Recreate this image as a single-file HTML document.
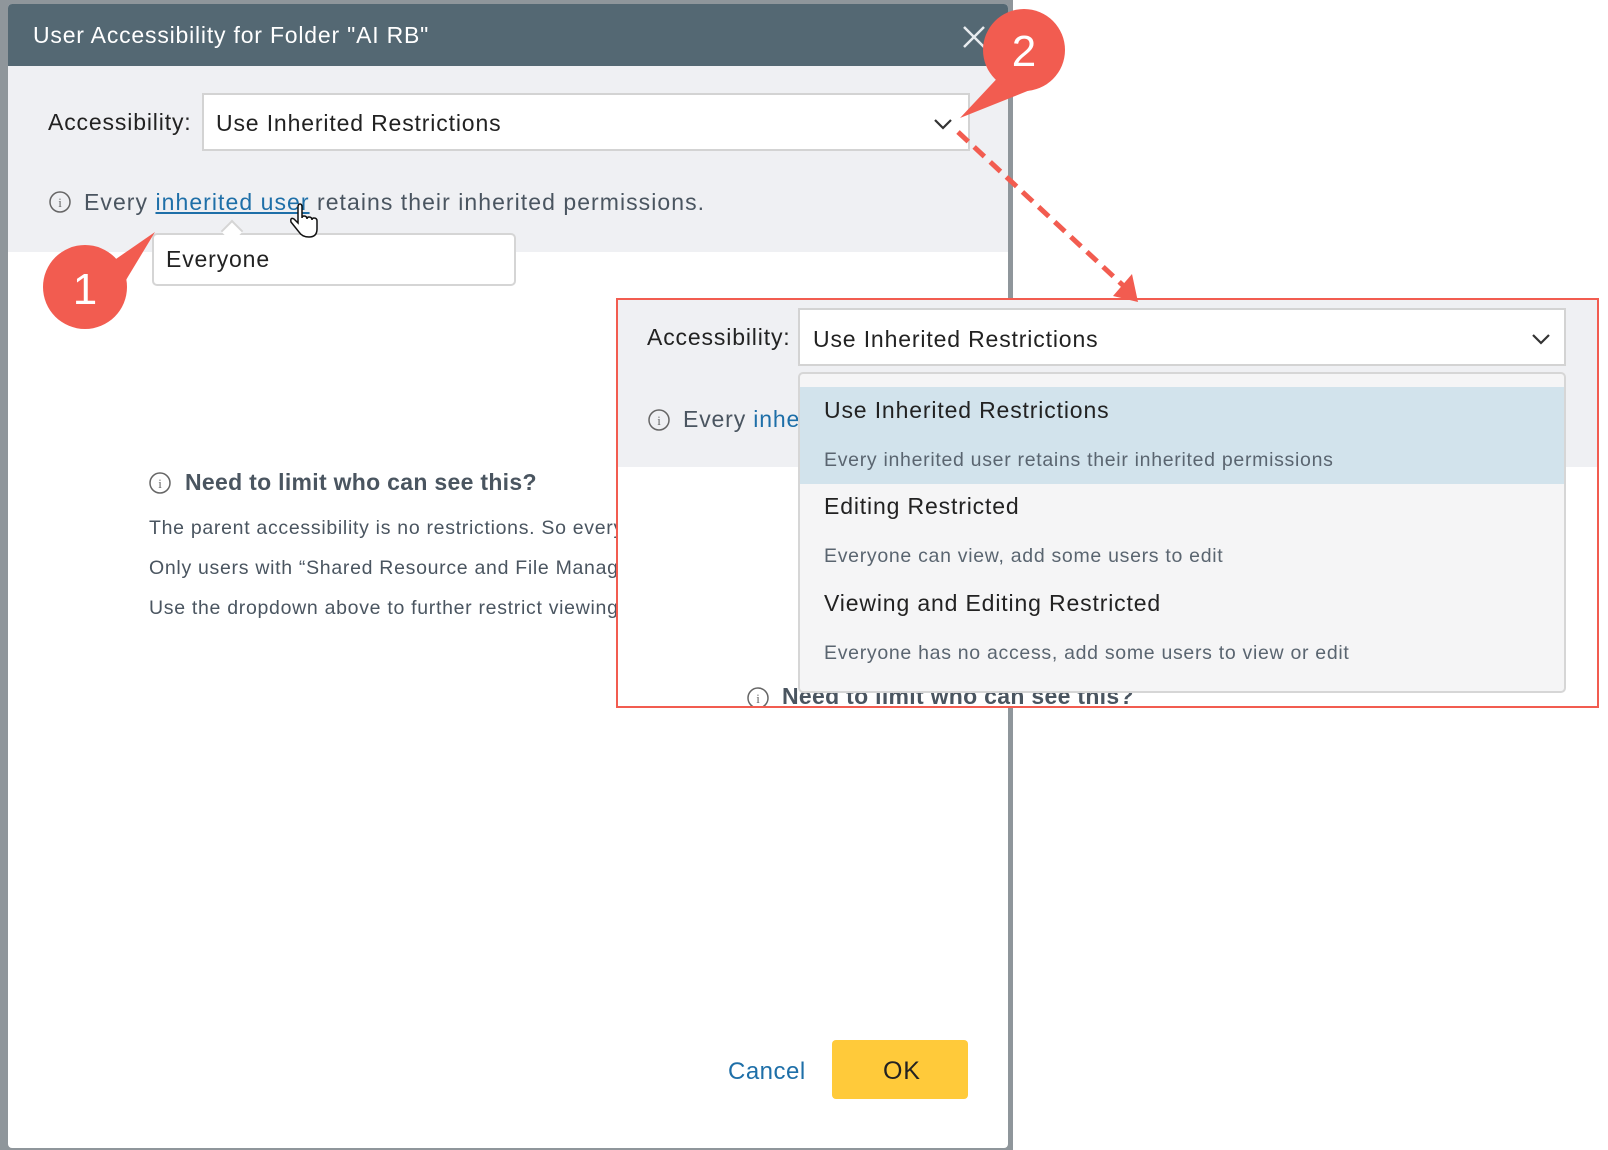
<!DOCTYPE html>
<html><head><meta charset="utf-8"><style>
*{box-sizing:border-box;margin:0;padding:0}
body{width:1608px;height:1150px;position:relative;overflow:hidden;background:#fff;font-family:"Liberation Sans",sans-serif;}
.abs{position:absolute}
.t{position:absolute;white-space:nowrap;line-height:1;letter-spacing:0.85px}
.s{letter-spacing:0.7px}
</style></head><body>
<div class="abs" style="left:0;top:0;width:1013px;height:1150px;background:#8f969b"></div>
<div class="abs" style="left:8px;top:4px;width:1000px;height:1144px;background:#fff;border-radius:4px;overflow:hidden">
  <div class="abs" style="left:0;top:0;width:1000px;height:62px;background:#546873"></div>
  <div class="t" style="left:25px;top:20px;font-size:23px;color:#fff;letter-spacing:0.8px">User Accessibility for Folder "AI RB"</div>
  <div class="abs" style="left:0;top:62px;width:1000px;height:186px;background:#eff0f3"></div>
  <div class="t" style="left:40px;top:107px;font-size:23px;color:#222">Accessibility:</div>
  <div class="abs" style="left:194px;top:89px;width:768px;height:58px;background:#fff;border:2px solid #d3d3d3"></div>
  <div class="t" style="left:208px;top:108px;font-size:23px;color:#222">Use Inherited Restrictions</div>
  <svg class="abs" style="left:925px;top:113px" width="20" height="14"><path d="M2 3 L10 11 L18 3" stroke="#333" stroke-width="2.2" fill="none"/></svg>
  <svg class="abs" style="left:40px;top:186px" width="24" height="24"><circle cx="12" cy="12" r="10" stroke="#666" stroke-width="1.5" fill="none"/><text x="12" y="17" font-size="13" text-anchor="middle" fill="#666" font-family="Liberation Serif">i</text></svg>
  <div class="t" style="left:76px;top:187px;font-size:23px;color:#4a5560;letter-spacing:1.05px">Every <span style="color:#1e6fa8;text-decoration:underline">inherited user</span> retains their inherited permissions.</div>
  <div class="abs" style="left:144px;top:229px;width:364px;height:53px;background:#fff;border:2px solid #d5d5d5;border-radius:5px"></div>
  <div class="abs" style="left:216px;top:219px;width:16px;height:16px;background:#fff;border-left:2px solid #d5d5d5;border-top:2px solid #d5d5d5;transform:rotate(45deg)"></div>
  <div class="t" style="left:158px;top:244px;font-size:23px;color:#222">Everyone</div>
  <svg class="abs" style="left:140px;top:467px" width="24" height="24"><circle cx="12" cy="12" r="10" stroke="#666" stroke-width="1.5" fill="none"/><text x="12" y="17" font-size="13" text-anchor="middle" fill="#666" font-family="Liberation Serif">i</text></svg>
  <div class="t" style="left:177px;top:467px;font-size:23px;font-weight:bold;color:#4a5560;letter-spacing:0.3px">Need to limit who can see this?</div>
  <div class="t s" style="left:141px;top:515px;font-size:19.5px;color:#4a5560">The parent accessibility is no restrictions. So everyone can see it.</div>
  <div class="t s" style="left:141px;top:555px;font-size:19.5px;color:#4a5560">Only users with “Shared Resource and File Management” permission can edit.</div>
  <div class="t s" style="left:141px;top:595px;font-size:19.5px;color:#4a5560">Use the dropdown above to further restrict viewing or editing.</div>
  <div class="t" style="left:720px;top:1056px;font-size:24px;color:#1e6fa8;letter-spacing:0.5px">Cancel</div>
  <div class="abs" style="left:824px;top:1036px;width:136px;height:59px;background:#ffca3a;border-radius:4px"></div>
  <div class="t" style="left:875px;top:1055px;font-size:25px;color:#222">OK</div>
</div>
<svg class="abs" style="left:960px;top:23px" width="28" height="28"><path d="M4 4L24 24M24 4L4 24" stroke="#e8ecef" stroke-width="2.5"/></svg>

<div class="abs" style="left:616px;top:298px;width:983px;height:410px;background:#fff;border:2px solid #f25c50;overflow:hidden">
  <div class="abs" style="left:0;top:0;width:983px;height:167px;background:#eff0f3"></div>
  <div class="t" style="left:29px;top:26px;font-size:23px;color:#222">Accessibility:</div>
  <div class="abs" style="left:180px;top:8px;width:768px;height:58px;background:#fff;border:2px solid #d3d3d3"></div>
  <div class="t" style="left:195px;top:28px;font-size:23px;color:#222">Use Inherited Restrictions</div>
  <svg class="abs" style="left:913px;top:32px" width="20" height="14"><path d="M2 3 L10 11 L18 3" stroke="#333" stroke-width="2.2" fill="none"/></svg>
  <svg class="abs" style="left:29px;top:108px" width="24" height="24"><circle cx="12" cy="12" r="10" stroke="#666" stroke-width="1.5" fill="none"/><text x="12" y="17" font-size="13" text-anchor="middle" fill="#666" font-family="Liberation Serif">i</text></svg>
  <div class="t" style="left:65px;top:108px;font-size:23px;color:#4a5560">Every <span style="color:#1e6fa8">inherited</span></div>
  <svg class="abs" style="left:128px;top:386px" width="24" height="24"><circle cx="12" cy="12" r="10" stroke="#666" stroke-width="1.5" fill="none"/><text x="12" y="17" font-size="13" text-anchor="middle" fill="#666" font-family="Liberation Serif">i</text></svg>
  <div class="t" style="left:164px;top:385px;font-size:23px;font-weight:bold;color:#4a5560;letter-spacing:0.3px">Need to limit who can see this?</div>
  <div class="abs" style="left:180px;top:72px;width:768px;height:321px;background:#f5f5f6;border:2px solid #d6d6d6;border-radius:5px;overflow:hidden">
    <div class="abs" style="left:0;top:13px;width:766px;height:97px;background:#d2e3ec"></div>
    <div class="t" style="left:24px;top:25px;font-size:23px;color:#222">Use Inherited Restrictions</div>
    <div class="t s" style="left:24px;top:77px;font-size:19.5px;color:#5a6570">Every inherited user retains their inherited permissions</div>
    <div class="t" style="left:24px;top:121px;font-size:23px;color:#222">Editing Restricted</div>
    <div class="t s" style="left:24px;top:173px;font-size:19.5px;color:#5a6570">Everyone can view, add some users to edit</div>
    <div class="t" style="left:24px;top:218px;font-size:23px;color:#222">Viewing and Editing Restricted</div>
    <div class="t s" style="left:24px;top:270px;font-size:19.5px;color:#5a6570">Everyone has no access, add some users to view or edit</div>
  </div>
</div>

<svg class="abs" style="left:0;top:0" width="1608" height="1150">
  <path d="M958 132 L1128 290" stroke="#f25c50" stroke-width="5" stroke-dasharray="14 8" fill="none"/>
  <path d="M1113 296 L1138 302 L1132 274 Z" fill="#f25c50"/>
  <path d="M155 232 L100 270 L120 290 Z" fill="#f25c50"/>
  <circle cx="85" cy="287" r="42" fill="#f25c50"/>
  <text x="85" y="304" font-size="44" fill="#fff" text-anchor="middle" font-family="Liberation Sans">1</text>
  <path d="M960 118 L1005 70 L1030 90 Z" fill="#f25c50"/>
  <circle cx="1024" cy="50" r="41" fill="#f25c50"/>
  <text x="1024" y="66" font-size="44" fill="#fff" text-anchor="middle" font-family="Liberation Sans">2</text>
  <path d="M298 207 v16 l-4 -4 q-4 -2 -3 3 l8 10 q3 5 10 5 q8 0 8 -8 v-8 q0 -3 -3 -3 q-2 0 -2 2 q0 -3 -3 -3 q-2 0 -2 2 q0 -3 -3 -3 q-2 0 -2 2 v-11 q0 -3 -2 -3 q-2 0 -2 3z" fill="#fff" stroke="#111" stroke-width="1.5"/>
</svg>
</body></html>
